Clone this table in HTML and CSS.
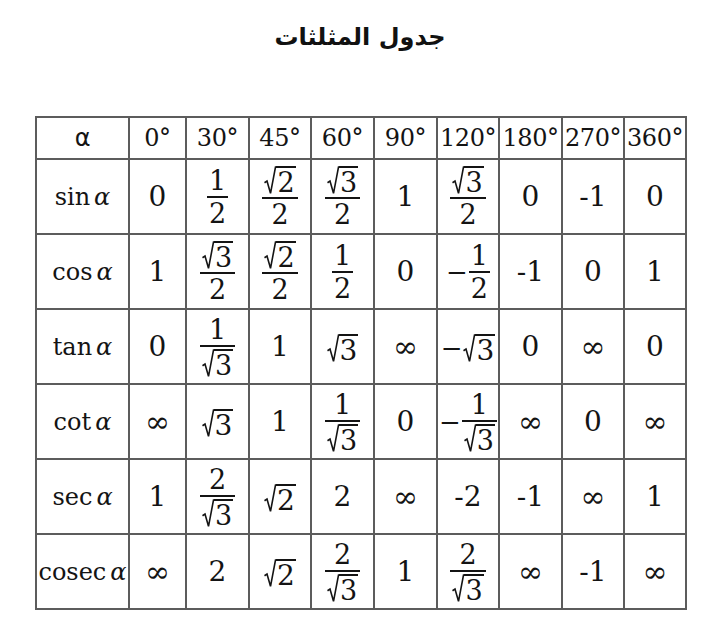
FILE: index.html
```html
<!DOCTYPE html>
<html lang="ar">
<head>
<meta charset="utf-8">
<link rel="stylesheet" href="styles.css">
</head>
<body dir="ltr">
<h1 class="title" dir="rtl">جدول المثلثات</h1>
<table class="trig">
<colgroup>
<col class="c-label"><col class="c0"><col class="c1"><col class="c2"><col class="c3"><col class="c4"><col class="c5"><col class="c6"><col class="c7"><col class="c8">
</colgroup>
<tr class="head">
<th><span class="alpha">α</span></th><th>0°</th><th>30°</th><th>45°</th><th>60°</th><th>90°</th><th>120°</th><th>180°</th><th>270°</th><th>360°</th>
</tr>
<tr>
<td class="label">sin<span class="ia">α</span></td>
<td>0</td>
<td><span class="frac"><span class="num">1</span><span class="den">2</span></span></td>
<td><span class="frac"><span class="num"><span class="sqrt"><svg viewBox="0 0 12 26" preserveAspectRatio="none"><path d="M0.5 15 L3 13.5 L6.5 24.5 L11.5 1 L12 1"/></svg><span class="rc">2</span></span></span><span class="den">2</span></span></td>
<td><span class="frac"><span class="num"><span class="sqrt"><svg viewBox="0 0 12 26" preserveAspectRatio="none"><path d="M0.5 15 L3 13.5 L6.5 24.5 L11.5 1 L12 1"/></svg><span class="rc">3</span></span></span><span class="den">2</span></span></td>
<td>1</td>
<td><span class="frac"><span class="num"><span class="sqrt"><svg viewBox="0 0 12 26" preserveAspectRatio="none"><path d="M0.5 15 L3 13.5 L6.5 24.5 L11.5 1 L12 1"/></svg><span class="rc">3</span></span></span><span class="den">2</span></span></td>
<td>0</td>
<td>-1</td>
<td>0</td>
</tr>
<tr>
<td class="label">cos<span class="ia">α</span></td>
<td>1</td>
<td><span class="frac"><span class="num"><span class="sqrt"><svg viewBox="0 0 12 26" preserveAspectRatio="none"><path d="M0.5 15 L3 13.5 L6.5 24.5 L11.5 1 L12 1"/></svg><span class="rc">3</span></span></span><span class="den">2</span></span></td>
<td><span class="frac"><span class="num"><span class="sqrt"><svg viewBox="0 0 12 26" preserveAspectRatio="none"><path d="M0.5 15 L3 13.5 L6.5 24.5 L11.5 1 L12 1"/></svg><span class="rc">2</span></span></span><span class="den">2</span></span></td>
<td><span class="frac"><span class="num">1</span><span class="den">2</span></span></td>
<td>0</td>
<td><span class="minus">−</span><span class="frac"><span class="num">1</span><span class="den">2</span></span></td>
<td>-1</td>
<td>0</td>
<td>1</td>
</tr>
<tr>
<td class="label">tan<span class="ia">α</span></td>
<td>0</td>
<td><span class="frac"><span class="num">1</span><span class="den"><span class="sqrt"><svg viewBox="0 0 12 26" preserveAspectRatio="none"><path d="M0.5 15 L3 13.5 L6.5 24.5 L11.5 1 L12 1"/></svg><span class="rc">3</span></span></span></span></td>
<td>1</td>
<td><span class="sqrt"><svg viewBox="0 0 12 26" preserveAspectRatio="none"><path d="M0.5 15 L3 13.5 L6.5 24.5 L11.5 1 L12 1"/></svg><span class="rc">3</span></span></td>
<td><span class="inf">∞</span></td>
<td><span class="minus">−</span><span class="sqrt"><svg viewBox="0 0 12 26" preserveAspectRatio="none"><path d="M0.5 15 L3 13.5 L6.5 24.5 L11.5 1 L12 1"/></svg><span class="rc">3</span></span></td>
<td>0</td>
<td><span class="inf">∞</span></td>
<td>0</td>
</tr>
<tr>
<td class="label">cot<span class="ia">α</span></td>
<td><span class="inf">∞</span></td>
<td><span class="sqrt"><svg viewBox="0 0 12 26" preserveAspectRatio="none"><path d="M0.5 15 L3 13.5 L6.5 24.5 L11.5 1 L12 1"/></svg><span class="rc">3</span></span></td>
<td>1</td>
<td><span class="frac"><span class="num">1</span><span class="den"><span class="sqrt"><svg viewBox="0 0 12 26" preserveAspectRatio="none"><path d="M0.5 15 L3 13.5 L6.5 24.5 L11.5 1 L12 1"/></svg><span class="rc">3</span></span></span></span></td>
<td>0</td>
<td><span class="minus">−</span><span class="frac"><span class="num">1</span><span class="den"><span class="sqrt"><svg viewBox="0 0 12 26" preserveAspectRatio="none"><path d="M0.5 15 L3 13.5 L6.5 24.5 L11.5 1 L12 1"/></svg><span class="rc">3</span></span></span></span></td>
<td><span class="inf">∞</span></td>
<td>0</td>
<td><span class="inf">∞</span></td>
</tr>
<tr>
<td class="label">sec<span class="ia">α</span></td>
<td>1</td>
<td><span class="frac"><span class="num">2</span><span class="den"><span class="sqrt"><svg viewBox="0 0 12 26" preserveAspectRatio="none"><path d="M0.5 15 L3 13.5 L6.5 24.5 L11.5 1 L12 1"/></svg><span class="rc">3</span></span></span></span></td>
<td><span class="sqrt"><svg viewBox="0 0 12 26" preserveAspectRatio="none"><path d="M0.5 15 L3 13.5 L6.5 24.5 L11.5 1 L12 1"/></svg><span class="rc">2</span></span></td>
<td>2</td>
<td><span class="inf">∞</span></td>
<td>-2</td>
<td>-1</td>
<td><span class="inf">∞</span></td>
<td>1</td>
</tr>
<tr>
<td class="label">cosec<span class="ia">α</span></td>
<td><span class="inf">∞</span></td>
<td>2</td>
<td><span class="sqrt"><svg viewBox="0 0 12 26" preserveAspectRatio="none"><path d="M0.5 15 L3 13.5 L6.5 24.5 L11.5 1 L12 1"/></svg><span class="rc">2</span></span></td>
<td><span class="frac"><span class="num">2</span><span class="den"><span class="sqrt"><svg viewBox="0 0 12 26" preserveAspectRatio="none"><path d="M0.5 15 L3 13.5 L6.5 24.5 L11.5 1 L12 1"/></svg><span class="rc">3</span></span></span></span></td>
<td>1</td>
<td><span class="frac"><span class="num">2</span><span class="den"><span class="sqrt"><svg viewBox="0 0 12 26" preserveAspectRatio="none"><path d="M0.5 15 L3 13.5 L6.5 24.5 L11.5 1 L12 1"/></svg><span class="rc">3</span></span></span></span></td>
<td><span class="inf">∞</span></td>
<td>-1</td>
<td><span class="inf">∞</span></td>
</tr>
</table>
</body>
</html>
```
FILE: styles.css
```css
html, body {
  margin: 0;
  padding: 0;
  background: #ffffff;
  color: #141414;
}
body {
  width: 720px;
  height: 628px;
  overflow: hidden;
  font-family: "DejaVu Serif", "Liberation Serif", serif;
}
.title {
  margin: 17px 0 0 0;
  height: 40px;
  line-height: 40px;
  text-align: center;
  font-family: "DejaVu Sans", sans-serif;
  font-weight: bold;
  font-size: 24px;
  color: #111;
}
.trig {
  margin: 59px 0 0 35px;
  border-collapse: collapse;
  table-layout: fixed;
  width: 650px;
}
.c-label { width: 93px; }
.c0 { width: 57px; }
.c1 { width: 63px; }
.c2 { width: 62px; }
.c3 { width: 63px; }
.c4 { width: 63px; }
.c5 { width: 62px; }
.c6 { width: 63px; }
.c7 { width: 62px; }
.c8 { width: 62px; }
.trig th, .trig td {
  border: 2px solid #5c5c5c;
  padding: 0;
  text-align: center;
  vertical-align: middle;
  white-space: nowrap;
}
.trig th {
  height: 40px;
  font-weight: normal;
  font-size: 24px;
  letter-spacing: -0.4px;
}
.trig td {
  height: 73px;
  font-size: 28px;
}
.alpha {
  font-family: "DejaVu Sans", sans-serif;
  font-size: 24px;
}
.trig td.label {
  font-size: 24px;
}
.ia {
  font-style: italic;
  margin-left: 4px;
}
.inf {
  font-size: 30px;
}
.minus {
  display: inline-block;
  vertical-align: middle;
  margin-right: 1px;
  font-size: 26px;
}
.frac {
  display: inline-flex;
  flex-direction: column;
  align-items: stretch;
  vertical-align: middle;
  font-size: 27px;
}
.frac > .num, .frac > .den {
  display: flex;
  justify-content: center;
  line-height: 27px;
  padding: 0 2px;
}
.frac > .num { padding-bottom: 2px; }
.frac > .den {
  border-top: 2px solid #141414;
  padding-top: 2px;
}
.sqrt {
  display: inline-flex;
  align-items: stretch;
  vertical-align: middle;
}
.sqrt svg {
  width: 12px;
  height: auto;
  display: block;
  fill: none;
  stroke: #141414;
  stroke-width: 1.6;
  overflow: visible;
}
.sqrt svg path {
  vector-effect: non-scaling-stroke;
}
.rc {
  display: block;
  border-top: 2px solid #141414;
  line-height: 25px;
  padding: 2px 1px 0 1px;
}
```
